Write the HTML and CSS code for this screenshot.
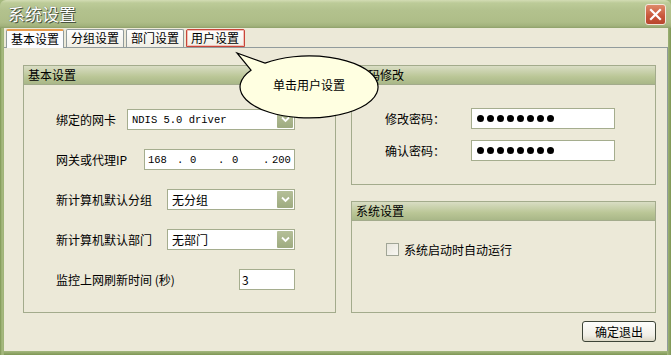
FILE: index.html
```html
<!DOCTYPE html>
<html lang="zh-CN">
<head>
<meta charset="utf-8">
<title>系统设置</title>
<link rel="stylesheet" href="styles.css">
</head>
<body>
<div class="window">
  <div class="titlebar">
    <span class="title">系统设置</span>
    <span class="close"><svg width="13" height="13" viewBox="0 0 13 13"><path d="M2 2 L11 11 M11 2 L2 11" stroke="#fff" stroke-width="2.2" stroke-linecap="square"/></svg></span>
  </div>
  <div class="frame">
    <div class="client">
      <div class="tabs">
        <div class="tab active">基本设置</div>
        <div class="tab">分组设置</div>
        <div class="tab">部门设置</div>
        <div class="tab marked">用户设置</div>
      </div>
      <div class="panel">
        <div class="columns">
          <div class="group left">
            <div class="ghead">基本设置</div>
            <div class="gbody rows">
              <div class="row">
                <span class="label">绑定的网卡</span>
                <div class="combo w168"><span class="mono">NDIS 5.0 driver</span><span class="arrow"><svg width="9" height="7" viewBox="0 0 9 7"><path d="M1 1.5 L4.5 5 L8 1.5" stroke="#fff" stroke-width="1.8" fill="none"/></svg></span></div>
              </div>
              <div class="row">
                <span class="label">网关或代理IP</span>
                <div class="field ip">
                  <span class="o1">168</span><span class="d1">.</span><span class="o2">0</span><span class="d2">.</span><span class="o3">0</span><span class="d3">.</span><span>200</span>
                </div>
              </div>
              <div class="row">
                <span class="label">新计算机默认分组</span>
                <div class="combo w128"><span>无分组</span><span class="arrow"><svg width="9" height="7" viewBox="0 0 9 7"><path d="M1 1.5 L4.5 5 L8 1.5" stroke="#fff" stroke-width="1.8" fill="none"/></svg></span></div>
              </div>
              <div class="row">
                <span class="label">新计算机默认部门</span>
                <div class="combo w128"><span>无部门</span><span class="arrow"><svg width="9" height="7" viewBox="0 0 9 7"><path d="M1 1.5 L4.5 5 L8 1.5" stroke="#fff" stroke-width="1.8" fill="none"/></svg></span></div>
              </div>
              <div class="row">
                <span class="label">监控上网刷新时间 (秒)</span>
                <div class="field w56">3</div>
              </div>
            </div>
          </div>
          <div class="rightcol">
            <div class="group pwd">
              <div class="ghead">密码修改</div>
              <div class="gbody prow">
                <div class="row">
                  <span class="plabel">修改密码：</span>
                  <div class="field pw"><i></i><i></i><i></i><i></i><i></i><i></i><i></i><i></i></div>
                </div>
                <div class="row">
                  <span class="plabel">确认密码：</span>
                  <div class="field pw"><i></i><i></i><i></i><i></i><i></i><i></i><i></i><i></i></div>
                </div>
              </div>
            </div>
            <div class="group sys">
              <div class="ghead">系统设置</div>
              <div class="gbody srow">
                <label class="check"><span class="box"></span>系统启动时自动运行</label>
              </div>
            </div>
          </div>
        </div>
        <div class="actions">
          <button class="btn">确定退出</button>
        </div>
      </div>
    </div>
  </div>
  <svg class="callout" width="671" height="355" viewBox="0 0 671 355">
    <path d="M265 63.1 A69 31 0 1 1 251 70.2 L237 53 Z" fill="#ffffe1" stroke="#000" stroke-width="1.2"/>
    <text x="309" y="90" text-anchor="middle">单击用户设置</text>
  </svg>
</div>
</body>
</html>
```
FILE: styles.css
```css
* { box-sizing: border-box; }
html, body { margin: 0; padding: 0; }
body {
  width: 671px;
  height: 355px;
  overflow: hidden;
  font-family: "Noto Sans CJK SC", "Noto Sans", sans-serif;
  font-size: 12px;
  color: #000;
  background: #ece9d8;
}
.window {
  position: relative;
  width: 671px;
  height: 355px;
  display: flex;
  flex-direction: column;
  background: linear-gradient(to bottom, #a5b97e, #8fa566);
}
.titlebar {
  height: 28px;
  flex: none;
  display: flex;
  align-items: center;
  justify-content: space-between;
  padding: 0 5px 0 8px;
  background: linear-gradient(to bottom, #d3dcb4 0px, #bccb98 3px, #b3c28e 10px, #aebd88 22px, #a2b27c 26px, #8e9f6a 28px);
  border-radius: 6px 6px 0 0;
}
.title {
  font-size: 17px;
  line-height: 20px;
  color: #fff;
  text-shadow: 1px 1px 0 #4a5440, 0 0 1px #4a5440;
  letter-spacing: 0;
}
.close {
  width: 21px;
  height: 21px;
  border: 1px solid #f3e6dc;
  border-radius: 3px;
  background: linear-gradient(to bottom, #de8a6a, #c8553a 60%, #b8472e);
  display: flex;
  align-items: center;
  justify-content: center;
}
.frame {
  flex: 1;
  display: flex;
  padding: 0 4px 4px 4px;
  background: linear-gradient(to right, #7e9654 0, #a7ba80 2px, #9db276 4px, transparent 4px, transparent 667px, #a7ba80 667px, #7e9654 671px), linear-gradient(to top, #7e9654, #a5b87e 4px);
}
.client {
  flex: 1;
  display: flex;
  flex-direction: column;
  background: #ece9d8;
  padding-top: 1px;
}
.tabs {
  display: flex;
  gap: 2px;
  padding-left: 2px;
  height: 18px;
  align-items: flex-end;
}
.tab {
  height: 18px;
  padding: 0 4px;
  line-height: 16px;
  border: 1px solid #919b9c;
  border-bottom: none;
  border-radius: 2px 2px 0 0;
  background: linear-gradient(to bottom, #fefefe, #f1efe6);
  white-space: nowrap;
}
.tab.active {
  height: 19px;
  margin-bottom: -1px;
  background: #fcfcfe;
  border-top: 2px solid #e89b4c;
  line-height: 16px;
  position: relative;
  z-index: 1;
}
.tab.marked {
  border: 1px solid #c8453a;
  box-shadow: inset 0 0 0 1px #f2c1b8;
  width: 59px;
}
.panel {
  flex: 1;
  border: 1px solid #919b9c;
  border-bottom: none;
  border-left: none;
  background: #ece9d8;
  padding: 17px 11px 0 19px;
  display: flex;
  flex-direction: column;
}
.columns {
  display: flex;
  gap: 15px;
}
.group {
  border: 1px solid #a3ab8c;
  background: #ece9d8;
}
.group.left { width: 313px; height: 248px; }
.rightcol {
  width: 305px;
  display: flex;
  flex-direction: column;
  gap: 16px;
}
.group.pwd { height: 120px; }
.group.sys { height: 112px; }
.ghead {
  height: 19px;
  line-height: 18px;
  padding-left: 4px;
  border-bottom: 1px solid #a3ab8c;
  background: linear-gradient(to bottom, #d9ddc4, #bac696 60%, #a9b788);
}
.gbody { display: flex; flex-direction: column; }
.rows {
  padding: 24px 40px 0 32px;
  gap: 19px;
}
.row {
  display: flex;
  align-items: center;
  height: 21px;
}
.label { white-space: nowrap; }
.combo, .field {
  margin-left: auto;
  height: 21px;
  background: #fff;
  border: 1px solid #a5ad8e;
  display: flex;
  align-items: center;
}
.combo {
  padding-left: 4px;
  justify-content: space-between;
}
.w168 { width: 168px; }
.w128 { width: 128px; }
.w56 { width: 56px; padding-left: 2px; }
.combo .arrow {
  width: 16px;
  height: 17px;
  margin-right: 1px;
  border-radius: 1px;
  background: linear-gradient(to bottom, #b5bf98, #9eab80);
  display: flex;
  align-items: center;
  justify-content: center;
}
.combo .mono {
  font-family: "Liberation Mono", "DejaVu Sans Mono", monospace;
  font-size: 10.5px;
}
.field.ip {
  width: 151px;
  padding-left: 3px;
  font-family: "Liberation Mono", "DejaVu Sans Mono", monospace;
  font-size: 10.5px;
}
.ip span { display: inline-block; }
.ip .o1 { width: 29px; }
.ip .d1 { width: 13px; }
.ip .o2 { width: 28px; }
.ip .d2 { width: 14px; }
.ip .o3 { width: 31px; }
.ip .d3 { width: 9px; }
.prow {
  padding: 23px 0 0 33px;
  gap: 11px;
}
.plabel { width: 86px; white-space: nowrap; }
.field.pw {
  margin-left: 0;
  width: 144px;
  padding-left: 5px;
  gap: 3px;
}
.field.pw i {
  display: block;
  width: 7px;
  height: 7px;
  border-radius: 50%;
  background: #000;
}
.srow { padding: 21px 0 0 34px; }
.check {
  display: flex;
  align-items: center;
  height: 14px;
  gap: 5px;
}
.check .box {
  width: 13px;
  height: 13px;
  border: 1px solid #a0a596;
  background: linear-gradient(to bottom right, #e8e6dc, #f8f7f2);
}
.actions {
  display: flex;
  justify-content: flex-end;
  margin-top: 8px;
}
.btn {
  width: 74px;
  height: 21px;
  padding: 0;
  font-family: inherit;
  font-size: 12px;
  border: 1px solid #3d4437;
  border-radius: 3px;
  background: linear-gradient(to bottom, #fdfdfb, #f1efe6 70%, #dcd8c6);
  color: #000;
}
.callout {
  position: absolute;
  left: 0;
  top: 0;
  pointer-events: none;
}
.callout text {
  font-family: "Noto Sans CJK SC", sans-serif;
  font-size: 12px;
}
```
